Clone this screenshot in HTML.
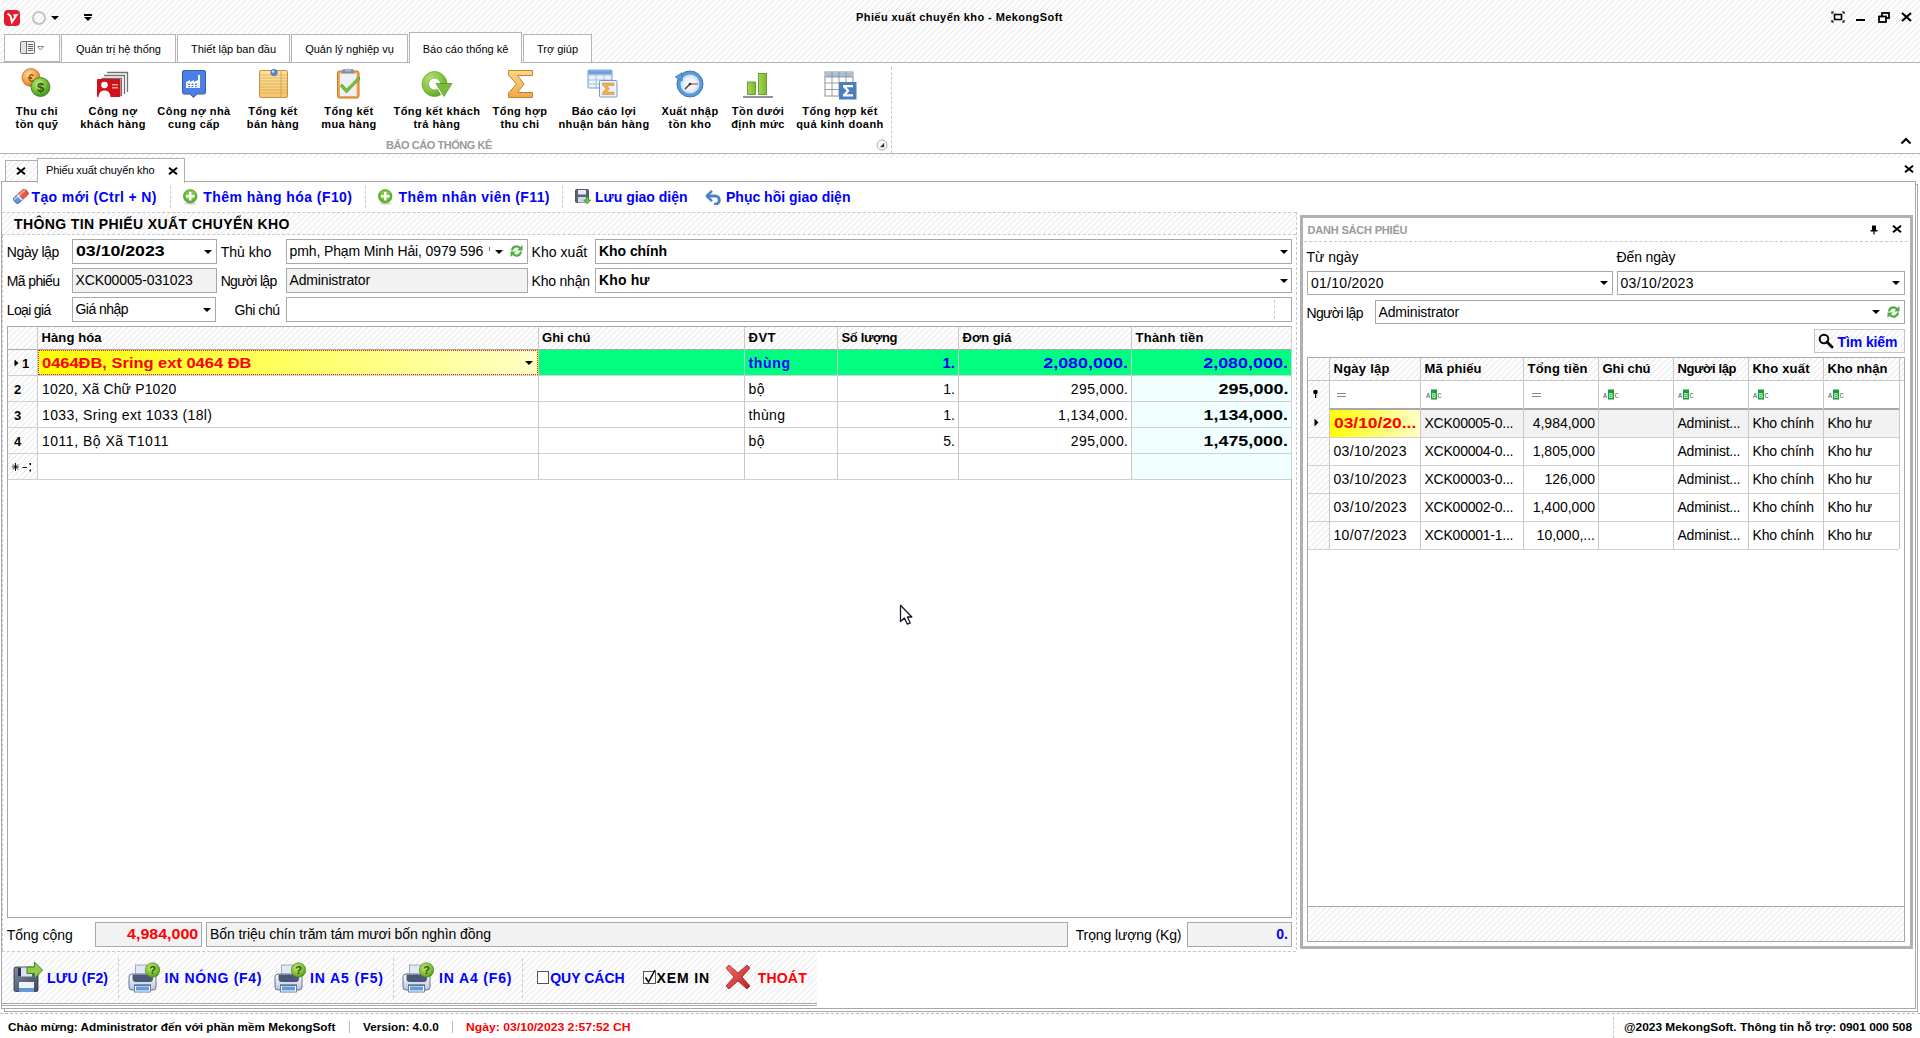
<!DOCTYPE html>
<html><head><meta charset="utf-8">
<style>
*{margin:0;padding:0;box-sizing:border-box}
html,body{width:1920px;height:1038px;overflow:hidden;background:#fff;font-family:"Liberation Sans",sans-serif;color:#000;position:relative}
.a{position:absolute;white-space:nowrap}
.h{background-color:#fdfdfd}
.b{font-weight:bold}
.tab{position:absolute;top:34px;height:28px;border:1px solid #b4b4b4;border-bottom:none;background:#fff;font-size:11px;text-align:center;line-height:29px;color:#000}
.rl{position:absolute;top:105px;letter-spacing:0.45px;font-size:11px;font-weight:bold;text-align:center;line-height:13px;white-space:nowrap}
.ico{position:absolute;top:67px;width:34px;height:34px}
.fld{position:absolute;border:1px solid #a8a8a8;background:#fff;height:25px;font-size:14px;line-height:23px;padding-left:3px;white-space:nowrap;overflow:hidden}
.gray{background:#f2f2f2}
.lbl{position:absolute;font-size:14px;line-height:16px;white-space:nowrap}
.dd{position:absolute;width:0;height:0;border-left:4px solid transparent;border-right:4px solid transparent;border-top:4px solid #000}
.dash{position:absolute;border-top:1px dashed #c8c8c8}
.vdash{position:absolute;border-left:1px dashed #c8c8c8}
.tbt{position:absolute;top:188px;font-size:14px;font-weight:bold;color:#0000ff;line-height:18px;white-space:nowrap}
.gc{position:absolute;font-size:14px;line-height:26px;white-space:nowrap;overflow:hidden}
.hl{position:absolute;background:#d0d0d0}
</style></head><body><svg width="0" height="0" style="position:absolute"><defs><pattern id="hp" width="6" height="6" patternUnits="userSpaceOnUse"><rect x="0" y="5" width="1" height="1" fill="#e6e6e6"/><rect x="1" y="4" width="1" height="1" fill="#e6e6e6"/><rect x="2" y="3" width="1" height="1" fill="#e6e6e6"/><rect x="3" y="2" width="1" height="1" fill="#e6e6e6"/><rect x="4" y="1" width="1" height="1" fill="#e6e6e6"/><rect x="5" y="0" width="1" height="1" fill="#e6e6e6"/></pattern></defs></svg>

<!-- ===== TITLE BAR + RIBBON TABS (hatched) ===== -->
<div class="a h" style="left:0;top:0;width:1920px;height:62px"><svg width="100%" height="100%" style="display:block"><rect width="100%" height="100%" fill="url(#hp)"/></svg></div>
<!-- logo -->
<div class="a" style="left:4px;top:10px;width:16px;height:16px;background:#e8192c;border-radius:4px"></div>
<svg class="a" style="left:4px;top:10px" width="16" height="16" viewBox="0 0 16 16"><path d="M3.5 3.5 L6.5 6 L8 12 L12.5 5 L9.5 5.5" fill="none" stroke="#fff" stroke-width="2"/></svg>
<div class="a" style="left:32px;top:11px;width:14px;height:14px;border:2px solid #c4c4c4;border-radius:50%"></div>
<div class="dd" style="left:51px;top:16px"></div>
<div class="a" style="left:84px;top:14px;width:8px;height:1.5px;background:#000"></div>
<div class="dd" style="left:84px;top:17px"></div>
<div class="a b" style="left:856px;top:12.2px;font-size:11px;line-height:11px;letter-spacing:0.42px">Phiếu xuất chuyển kho - MekongSoft</div>
<!-- window buttons -->
<svg class="a" style="left:1831px;top:11px" width="14" height="12" viewBox="0 0 14 12"><path d="M1 3V1H3M11 1H13V3M13 9V11H11M3 11H1V9" fill="none" stroke="#000" stroke-width="1.2"/><rect x="3.5" y="3.5" width="7" height="5" fill="none" stroke="#000" stroke-width="1.6"/></svg>
<div class="a" style="left:1856px;top:19px;width:9px;height:2px;background:#000"></div>
<svg class="a" style="left:1878px;top:12px" width="12" height="11" viewBox="0 0 12 11"><rect x="4" y="1" width="7" height="5" fill="none" stroke="#000" stroke-width="1.8"/><rect x="1" y="4.5" width="7" height="5.5" fill="#fff" stroke="#000" stroke-width="1.8"/></svg>
<svg class="a" style="left:1901px;top:12px" width="11" height="10" viewBox="0 0 11 10"><path d="M1 1L10 9M10 1L1 9" stroke="#000" stroke-width="2.2"/></svg>

<!-- tabs -->
<div class="tab" style="left:4px;width:56px;height:28px;border-bottom:1px solid #b4b4b4"></div>
<svg class="a" style="left:19px;top:40px" width="28" height="15" viewBox="0 0 28 15"><rect x="1.5" y="1.5" width="14" height="12" rx="1.5" fill="#f8f8f8" stroke="#707070"/><rect x="2" y="2" width="5" height="11" fill="#e4e4e4"/><line x1="7.5" y1="2" x2="7.5" y2="13" stroke="#707070"/><line x1="9" y1="4.5" x2="14" y2="4.5" stroke="#606060"/><line x1="9" y1="6.5" x2="14" y2="6.5" stroke="#606060"/><line x1="9" y1="8.5" x2="14" y2="8.5" stroke="#606060"/><line x1="9" y1="10.5" x2="14" y2="10.5" stroke="#606060"/><path d="M18.5 6.5L24.5 6.5L21.5 10Z" fill="none" stroke="#888"/></svg>
<div class="tab" style="left:61px;width:115px">Quản trị hệ thống</div>
<div class="tab" style="left:177px;width:113px">Thiết lập ban đầu</div>
<div class="tab" style="left:291px;width:117px">Quản lý nghiệp vụ</div>
<div class="tab" style="left:409px;width:113px;top:32px;height:31px;line-height:33px;z-index:2">Báo cáo thống kê</div>
<div class="tab" style="left:523px;width:69px">Trợ giúp</div>
<div class="a" style="left:0;top:62px;width:1920px;height:1px;background:#b4b4b4"></div>
<div class="a" style="left:410px;top:62px;width:111px;height:1px;background:#fff;z-index:3"></div>

<!-- ===== RIBBON CONTENT ===== -->
<div class="a" style="left:0;top:63px;width:1920px;height:90px;background:#fff"></div>
<div class="a" style="left:0;top:153px;width:1920px;height:1px;background:#b4b4b4"></div>
<!-- 1 Thu chi ton quy: coins -->
<svg class="a" style="left:21px;top:68px" width="32" height="32" viewBox="0 0 32 32">
<defs><radialGradient id="gC1" cx="0.4" cy="0.35" r="0.7"><stop offset="0" stop-color="#ffe3a8"/><stop offset="0.6" stop-color="#f0a040"/><stop offset="1" stop-color="#c87018"/></radialGradient>
<radialGradient id="gC2" cx="0.4" cy="0.35" r="0.7"><stop offset="0" stop-color="#c8f080"/><stop offset="0.6" stop-color="#70b830"/><stop offset="1" stop-color="#3e8a18"/></radialGradient></defs>
<circle cx="10" cy="9.5" r="9" fill="url(#gC1)" stroke="#c07020" stroke-width="0.8"/>
<text x="10" y="13.5" font-size="11" font-weight="bold" text-anchor="middle" fill="#a05010" font-family="Liberation Sans">€</text>
<circle cx="19.5" cy="19" r="9.5" fill="url(#gC2)" stroke="#3a7a18" stroke-width="0.8"/>
<text x="19.5" y="24" font-size="13" font-weight="bold" text-anchor="middle" fill="#2a5a10" font-family="Liberation Sans">$</text>
</svg>
<div class="rl" style="left:0;width:74px">Thu chi<br>tồn quỹ</div>

<!-- 2 Cong no khach hang -->
<svg class="a" style="left:96px;top:68px" width="34" height="32" viewBox="0 0 34 32">
<path d="M11 4.5H31.5V24" fill="none" stroke="#707070" stroke-width="1.3"/>
<path d="M8 7.5H28.5V26" fill="none" stroke="#707070" stroke-width="1.3"/>
<path d="M5.5 10.5H25.5V28" fill="none" stroke="#707070" stroke-width="1.3"/>
<rect x="1" y="11" width="23.5" height="18" rx="1" fill="#d0101a"/>
<circle cx="8.5" cy="17" r="3.3" fill="#fff"/>
<path d="M2.5 29C3 24.5 5 22.5 8.5 22.5C12 22.5 14 24.5 14.5 29Z" fill="#fff"/>
<rect x="16" y="16" width="6" height="1.5" fill="#f4a0a0"/><rect x="16" y="19" width="6" height="1.5" fill="#f4a0a0"/>
</svg>
<div class="rl" style="left:74px;width:78px">Công nợ<br>khách hàng</div>

<!-- 3 Cong no nha cung cap -->
<svg class="a" style="left:181px;top:69px" width="26" height="32" viewBox="0 0 26 32">
<path d="M3 1.5H23A1.5 1.5 0 0 1 24.5 3V23.5A1.5 1.5 0 0 1 23 25H16L12.5 28.5L9 25H3A1.5 1.5 0 0 1 1.5 23.5V3A1.5 1.5 0 0 1 3 1.5Z" fill="#4a7ee8" stroke="#3a5a9a" stroke-width="1"/>
<path d="M5 19V13L9 11V13L13 11V13L17 11V6H19V19Z" fill="#fff"/>
<rect x="7" y="14.5" width="2" height="1.5" fill="#4a7ee8"/><rect x="10.5" y="14.5" width="2" height="1.5" fill="#4a7ee8"/><rect x="14" y="14.5" width="2" height="1.5" fill="#4a7ee8"/>
<rect x="7" y="17" width="2" height="1.2" fill="#4a7ee8"/><rect x="10.5" y="17" width="2" height="1.2" fill="#4a7ee8"/><rect x="14" y="17" width="2" height="1.2" fill="#4a7ee8"/>
</svg>
<div class="rl" style="left:152px;width:84px">Công nợ nhà<br>cung cấp</div>

<!-- 4 Tong ket ban hang: notepad -->
<svg class="a" style="left:258px;top:68px" width="32" height="32" viewBox="0 0 32 32">
<defs><linearGradient id="gNp" x1="0" y1="0" x2="0" y2="1"><stop offset="0" stop-color="#fce4a0"/><stop offset="1" stop-color="#f4c868"/></linearGradient></defs>
<rect x="1.5" y="2.5" width="28" height="27" rx="1.5" fill="url(#gNp)" stroke="#c89040" stroke-width="1"/>
<g stroke="#d09848" stroke-width="0.7" opacity="0.8"><line x1="2" y1="7" x2="29" y2="7"/><line x1="2" y1="10" x2="29" y2="10"/><line x1="2" y1="13" x2="29" y2="13"/><line x1="2" y1="16" x2="29" y2="16"/><line x1="2" y1="19" x2="29" y2="19"/><line x1="2" y1="22" x2="29" y2="22"/><line x1="2" y1="25" x2="29" y2="25"/></g>
<line x1="23" y1="3" x2="23" y2="29" stroke="#e09050" stroke-width="0.8"/>
<circle cx="16" cy="4.5" r="3.3" fill="#5a8ac8" stroke="#3a6aa8" stroke-width="0.6"/><circle cx="15" cy="3.5" r="1.2" fill="#c8e0f8"/>
</svg>
<div class="rl" style="left:236px;width:74px">Tổng kết<br>bán hàng</div>

<!-- 5 Tong ket mua hang: clipboard -->
<svg class="a" style="left:336px;top:68px" width="26" height="32" viewBox="0 0 26 32">
<rect x="1.5" y="3" width="21.5" height="27" rx="2" fill="#f0a850" stroke="#c07828" stroke-width="1"/>
<rect x="4" y="5.5" width="16.5" height="22.5" fill="#eef0f6"/>
<path d="M7 1.5H17L18 5H6Z" fill="#8898b8" stroke="#6878a0" stroke-width="0.6"/>
<ellipse cx="12" cy="2" rx="3" ry="1.5" fill="#a8b8d0"/>
<path d="M6 16L10.5 21L23 8.5L24 11L10.5 25L4.5 18.5Z" fill="#78c038" stroke="#4a8a20" stroke-width="0.6"/>
</svg>
<div class="rl" style="left:310px;width:78px">Tổng kết<br>mua hàng</div>

<!-- 6 Tong ket khach tra hang: green refresh -->
<svg class="a" style="left:421px;top:69px" width="32" height="30" viewBox="0 0 32 30">
<defs><radialGradient id="gR" cx="0.35" cy="0.3" r="0.8"><stop offset="0" stop-color="#b8e070"/><stop offset="0.7" stop-color="#78bc38"/><stop offset="1" stop-color="#4a9020"/></radialGradient></defs>
<path d="M26 15A12.5 12.5 0 1 0 19.75 25.83L16.5 20.2A6 6 0 1 1 19.5 15Z" fill="url(#gR)" stroke="#5a9a28" stroke-width="0.6"/>
<path d="M15 14.5H31L23 27.5Z" fill="#78bc38" stroke="#4a8a20" stroke-width="0.6"/>
</svg>
<div class="rl" style="left:388px;width:98px">Tổng kết khách<br>trả hàng</div>

<!-- 7 Tong hop thu chi: sigma -->
<svg class="a" style="left:507px;top:69px" width="27" height="30" viewBox="0 0 27 30">
<defs><linearGradient id="gS" x1="0" y1="0" x2="0" y2="1"><stop offset="0" stop-color="#fbd888"/><stop offset="1" stop-color="#f0a848"/></linearGradient></defs>
<path d="M1.5 1.5H25.5V6.5H10.5L17 15L10.5 23.5H25.5V28.5H1.5V24L9.5 15L1.5 6Z" fill="url(#gS)" stroke="#c88030" stroke-width="1"/>
</svg>
<div class="rl" style="left:486px;width:68px">Tổng hợp<br>thu chi</div>

<!-- 8 Bao cao loi nhuan: table + sigma -->
<svg class="a" style="left:587px;top:69px" width="32" height="30" viewBox="0 0 32 30">
<rect x="1" y="1" width="24" height="18" rx="1" fill="#eef2fa" stroke="#7898c8" stroke-width="1"/>
<rect x="1.5" y="1.5" width="23" height="4" fill="#6aa0e0"/>
<g stroke="#98b0d8" stroke-width="0.8"><line x1="1" y1="6" x2="25" y2="6"/><line x1="1" y1="11" x2="25" y2="11"/><line x1="1" y1="15" x2="25" y2="15"/><line x1="9" y1="1" x2="9" y2="19"/><line x1="17" y1="1" x2="17" y2="19"/></g>
<rect x="12.5" y="11.5" width="17.5" height="16.5" rx="1" fill="#eef2fa" stroke="#7898c8" stroke-width="1"/>
<path d="M15.5 14H27V16.5H19.5L22.5 19.8L19.5 23H27V25.5H15.5V23.5L19 19.8L15.5 16Z" fill="#f0b050" stroke="#c88030" stroke-width="0.5"/>
</svg>
<div class="rl" style="left:550px;width:108px">Báo cáo lợi<br>nhuận bán hàng</div>

<!-- 9 Xuat nhap ton kho: clock w/ arrow -->
<svg class="a" style="left:674px;top:68px" width="32" height="32" viewBox="0 0 32 32">
<defs><radialGradient id="gX" cx="0.5" cy="0.5" r="0.55"><stop offset="0" stop-color="#ffffff"/><stop offset="0.6" stop-color="#e8f0f8"/><stop offset="1" stop-color="#c0d4ec"/></radialGradient></defs>
<circle cx="16" cy="16" r="13" fill="#5a9ad8" stroke="#3a78b8" stroke-width="1"/>
<circle cx="16" cy="16" r="9.5" fill="url(#gX)"/>
<path d="M1 9L8 4.5L8.5 13Z" fill="#5a9ad8" stroke="#3a78b8" stroke-width="0.6"/>
<line x1="16" y1="16" x2="11" y2="21" stroke="#303030" stroke-width="1.2"/>
<line x1="16" y1="16" x2="24" y2="16" stroke="#d02020" stroke-width="1"/>
<circle cx="16" cy="16" r="1.3" fill="#303030"/>
</svg>
<div class="rl" style="left:650px;width:80px">Xuất nhập<br>tồn kho</div>

<!-- 10 Ton duoi dinh muc: bars -->
<svg class="a" style="left:742px;top:70px" width="32" height="30" viewBox="0 0 32 30">
<defs><linearGradient id="gB" x1="0" y1="0" x2="1" y2="0"><stop offset="0" stop-color="#a8d850"/><stop offset="1" stop-color="#78b830"/></linearGradient></defs>
<rect x="5.5" y="12" width="8" height="12.5" fill="url(#gB)" stroke="#5a8a28" stroke-width="0.8"/>
<rect x="16.5" y="3.5" width="8" height="21" fill="url(#gB)" stroke="#5a8a28" stroke-width="0.8"/>
<line x1="1" y1="27" x2="31" y2="27" stroke="#404868" stroke-width="1.2"/>
</svg>
<div class="rl" style="left:722px;width:72px">Tồn dưới<br>định mức</div>

<!-- 11 Tong hop ket qua kinh doanh: grid + sigma -->
<svg class="a" style="left:824px;top:70px" width="34" height="32" viewBox="0 0 34 32">
<rect x="1" y="2" width="28" height="24" fill="#fff" stroke="#909090" stroke-width="1"/>
<rect x="1.5" y="2.5" width="27" height="4.5" fill="#a8bcdc"/>
<g stroke="#909090" stroke-width="0.9"><line x1="1" y1="7" x2="29" y2="7"/><line x1="1" y1="13" x2="29" y2="13"/><line x1="1" y1="19.5" x2="29" y2="19.5"/><line x1="8" y1="2" x2="8" y2="26"/><line x1="15" y1="2" x2="15" y2="26"/><line x1="22" y1="2" x2="22" y2="26"/></g>
<rect x="15" y="12" width="17.5" height="17.5" fill="#4a7ec0"/>
<path d="M19 15H29V17.3H22.5L25.5 20.8L22.5 24.2H29V26.5H19V24.5L22.7 20.8L19 17Z" fill="#fff"/>
</svg>
<div class="rl" style="left:790px;width:100px">Tổng hợp kết<br>quả kinh doanh</div>

<div class="a b" style="left:386px;top:139px;font-size:11px;line-height:13px;color:#9a9a9a;letter-spacing:-0.45px">BÁO CÁO THỐNG KÊ</div>
<div class="vdash" style="left:891px;top:67px;height:86px"></div>
<svg class="a" style="left:876px;top:139px" width="12" height="12" viewBox="0 0 12 12"><circle cx="6" cy="6" r="5" fill="#fff" stroke="#aaa"/><path d="M3.8 8.2H8.2V3.8Z" fill="#333"/></svg>
<svg class="a" style="left:1900px;top:137px" width="12" height="8" viewBox="0 0 12 8"><path d="M1.5 6.5L6 2L10.5 6.5" fill="none" stroke="#000" stroke-width="2"/></svg>

<!--RIBBON_ITEMS_END-->

<div class="a h" style="left:0;top:154px;width:1920px;height:4px"><svg width="100%" height="100%" style="display:block"><rect width="100%" height="100%" fill="url(#hp)"/></svg></div><div class="a" style="left:4px;top:184px;width:1914px;height:828px;border:1px solid #a8a8a8;background:#fff"></div><div class="a" style="left:1px;top:181px;width:1915px;height:828px;border:1px solid #a8a8a8;background:#fff"></div><div class="a h" style="left:5px;top:160px;width:33px;height:21px;border:1px solid #b0b0b0;border-bottom:none"><svg width="100%" height="100%" style="display:block"><rect width="100%" height="100%" fill="url(#hp)"/></svg></div><svg class="a" style="left:16px;top:167px" width="10" height="8" viewBox="0 0 10 8"><path d="M1 0.8L9 7.2M9 0.8L1 7.2" stroke="#000" stroke-width="2"/></svg><div class="a" style="left:37px;top:158px;width:148px;height:25px;border:1px solid #b0b0b0;border-bottom:none;background:#fff"></div><div class="a" style="top:164.69px;font-size:11px;line-height:11px;letter-spacing:-0.140px;left:46.00px;">Phiếu xuất chuyển kho</div><svg class="a" style="left:168px;top:167px" width="10" height="8" viewBox="0 0 10 8"><path d="M1 0.8L9 7.2M9 0.8L1 7.2" stroke="#000" stroke-width="2"/></svg><svg class="a" style="left:1904px;top:165px" width="10" height="8" viewBox="0 0 10 8"><path d="M1 0.8L9 7.2M9 0.8L1 7.2" stroke="#000" stroke-width="2"/></svg><svg class="a" style="left:12px;top:189px" width="18" height="16" viewBox="0 0 18 16">
<g transform="rotate(-42 8.5 7.5)">
<rect x="1" y="4" width="16" height="7.2" rx="2.5" fill="#e05a48" stroke="#b03020" stroke-width="0.7"/>
<rect x="1" y="4" width="7" height="7.2" rx="2.5" fill="#5a98e0" stroke="#3a70b0" stroke-width="0.7"/>
<rect x="6.5" y="4.2" width="1.6" height="7" fill="#f4f4f4"/>
<rect x="1.5" y="4.6" width="15" height="2" rx="1" fill="#ffffff" opacity="0.45"/>
</g></svg><div class="a" style="top:190.15px;font-size:14px;line-height:14px;font-weight:bold;color:#0000ff;letter-spacing:0.385px;left:31.50px;">Tạo mới (Ctrl + N)</div><div class="vdash" style="left:170px;top:186px;height:22px"></div><svg class="a" style="left:183px;top:189px" width="15" height="16" viewBox="0 0 15 16">
<ellipse cx="7.5" cy="14.5" rx="6" ry="1.3" fill="#d8d8d8"/>
<circle cx="7.2" cy="7.3" r="6.8" fill="#62b230" stroke="#4a9020" stroke-width="0.6"/>
<circle cx="7.2" cy="6.3" r="5" fill="#80cc50"/>
<path d="M6 3H8.4V6.1H11.5V8.5H8.4V11.6H6V8.5H2.9V6.1H6Z" fill="#fff"/></svg><div class="a" style="top:190.15px;font-size:14px;line-height:14px;font-weight:bold;color:#0000ff;letter-spacing:0.440px;left:203.30px;">Thêm hàng hóa (F10)</div><div class="vdash" style="left:365px;top:186px;height:22px"></div><svg class="a" style="left:378px;top:189px" width="15" height="16" viewBox="0 0 15 16">
<ellipse cx="7.5" cy="14.5" rx="6" ry="1.3" fill="#d8d8d8"/>
<circle cx="7.2" cy="7.3" r="6.8" fill="#62b230" stroke="#4a9020" stroke-width="0.6"/>
<circle cx="7.2" cy="6.3" r="5" fill="#80cc50"/>
<path d="M6 3H8.4V6.1H11.5V8.5H8.4V11.6H6V8.5H2.9V6.1H6Z" fill="#fff"/></svg><div class="a" style="top:190.15px;font-size:14px;line-height:14px;font-weight:bold;color:#0000ff;letter-spacing:0.414px;left:398.50px;">Thêm nhân viên (F11)</div><div class="vdash" style="left:562px;top:186px;height:22px"></div><svg class="a" style="left:575px;top:189px" width="17" height="16" viewBox="0 0 17 16">
<rect x="0.5" y="0.5" width="13" height="13" rx="1" fill="#5a6478" stroke="#3a4050" stroke-width="0.8"/>
<rect x="3" y="1" width="8" height="4.5" fill="#e8ecf4"/><rect x="3" y="8" width="8" height="5.5" fill="#d0d8e8"/>
<path d="M11 8.5H13.5V11H16L12.2 15L8.5 11H11Z" fill="#6cc040" stroke="#3a8a20" stroke-width="0.6"/></svg><div class="a" style="top:190.15px;font-size:14px;line-height:14px;font-weight:bold;color:#0000ff;left:595.00px;">Lưu giao diện</div><svg class="a" style="left:705px;top:189px" width="18" height="16" viewBox="0 0 18 16">
<path d="M7 1.8L1.8 7L7 12.2" fill="none" stroke="#4a80c8" stroke-width="2.5" stroke-linejoin="round"/>
<path d="M2.5 7H11A4.2 4.2 0 0 1 11 15.2H9" fill="none" stroke="#4a80c8" stroke-width="2.8"/></svg><div class="a" style="top:190.15px;font-size:14px;line-height:14px;font-weight:bold;color:#0000ff;left:726.00px;">Phục hồi giao diện</div><div class="dash" style="left:2px;top:212px;width:1294px"></div><div class="a h" style="left:2px;top:213px;width:1294px;height:21px"><svg width="100%" height="100%" style="display:block"><rect width="100%" height="100%" fill="url(#hp)"/></svg></div><div class="dash" style="left:2px;top:234px;width:1294px"></div><div class="vdash" style="left:1296px;top:212px;height:738px"></div><div class="vdash" style="left:2px;top:235px;height:716px"></div><div class="a" style="top:216.65px;font-size:14px;line-height:14px;font-weight:bold;letter-spacing:0.394px;left:14.00px;">THÔNG TIN PHIẾU XUẤT CHUYỂN KHO</div><div class="a" style="top:245.15px;font-size:14px;line-height:14px;letter-spacing:-0.394px;left:6.80px;">Ngày lập</div><div class="a" style="left:72px;top:239px;width:145px;height:25px;border:1px solid #a8a8a8;background:#fff;"></div><div class="a" style="top:244.15px;font-size:14px;line-height:14px;font-weight:bold;left:75.70px;transform:scaleX(1.2654);transform-origin:left;">03/10/2023</div><div class="dd" style="left:204px;top:250px"></div><div class="a" style="top:245.15px;font-size:14px;line-height:14px;left:220.70px;">Thủ kho</div><div class="a" style="left:286px;top:239px;width:242px;height:25px;border:1px solid #a8a8a8;background:#fff;"></div><div class="a" style="top:244.15px;font-size:14px;line-height:14px;letter-spacing:-0.119px;left:289.50px;">pmh, Phạm Minh Hải, 0979 596 '</div><div class="a" style="left:487px;top:241px;width:6px;height:21px;background:#fff"></div><div class="a" style="left:489px;top:247px;width:1px;height:4px;background:#777"></div><div class="dd" style="left:495px;top:250px"></div><svg class="a" style="left:509px;top:244px" width="15" height="14" viewBox="0 0 15 14">
<path d="M2 6.5A5.5 5.5 0 0 1 11.5 3L13.5 1V6.5H8L10 4.5A3.6 3.6 0 0 0 4 6.5Z" fill="#4cae3c"/>
<path d="M13 7.5A5.5 5.5 0 0 1 3.5 11L1.5 13V7.5H7L5 9.5A3.6 3.6 0 0 0 11 7.5Z" fill="#4cae3c"/></svg><div class="a" style="top:245.15px;font-size:14px;line-height:14px;letter-spacing:0.063px;left:531.50px;">Kho xuất</div><div class="a" style="left:595px;top:239px;width:697px;height:25px;border:1px solid #a8a8a8;background:#fff;"></div><div class="a" style="top:244.15px;font-size:14px;line-height:14px;font-weight:bold;letter-spacing:-0.054px;left:599.00px;">Kho chính</div><div class="dd" style="left:1280px;top:250px"></div><div class="a" style="top:274.15px;font-size:14px;line-height:14px;letter-spacing:-0.628px;left:6.80px;">Mã phiếu</div><div class="a" style="left:72px;top:268px;width:145px;height:25px;border:1px solid #a8a8a8;background:#f2f2f2;"></div><div class="a" style="top:273.15px;font-size:14px;line-height:14px;letter-spacing:-0.121px;left:75.50px;">XCK00005-031023</div><div class="a" style="top:274.15px;font-size:14px;line-height:14px;letter-spacing:-0.704px;left:220.70px;">Người lập</div><div class="a" style="left:286px;top:268px;width:242px;height:25px;border:1px solid #a8a8a8;background:#f2f2f2;"></div><div class="a" style="top:273.15px;font-size:14px;line-height:14px;letter-spacing:-0.156px;left:289.50px;">Administrator</div><div class="a" style="top:274.15px;font-size:14px;line-height:14px;letter-spacing:-0.206px;left:531.50px;">Kho nhận</div><div class="a" style="left:595px;top:268px;width:697px;height:25px;border:1px solid #a8a8a8;background:#fff;"></div><div class="a" style="top:273.15px;font-size:14px;line-height:14px;font-weight:bold;letter-spacing:0.141px;left:599.00px;">Kho hư</div><div class="dd" style="left:1280px;top:279px"></div><div class="a" style="top:303.15px;font-size:14px;line-height:14px;letter-spacing:-0.663px;left:6.80px;">Loại giá</div><div class="a" style="left:72px;top:297px;width:144px;height:25px;border:1px solid #a8a8a8;background:#fff;"></div><div class="a" style="top:302.15px;font-size:14px;line-height:14px;letter-spacing:-0.546px;left:75.50px;">Giá nhập</div><div class="dd" style="left:203px;top:308px"></div><div class="a" style="top:303.15px;font-size:14px;line-height:14px;letter-spacing:-0.458px;left:234.50px;">Ghi chú</div><div class="a" style="left:286px;top:297px;width:1006px;height:25px;border:1px solid #a8a8a8;background:#fff;"></div><div class="vdash" style="left:1274px;top:300px;height:19px"></div><div class="a" style="left:7px;top:326px;width:1285px;height:592px;border:1px solid #a8a8a8;background:#fff"></div><div class="a h" style="left:8px;top:327px;width:1283px;height:22px"><svg width="100%" height="100%" style="display:block"><rect width="100%" height="100%" fill="url(#hp)"/></svg></div><div class="a" style="left:8px;top:349px;width:1283px;height:1px;background:#a8a8a8"></div><div class="a" style="left:538px;top:350px;width:753px;height:25px;background:#00ff80"></div><div class="a" style="left:38px;top:350px;width:500px;height:25px;background:linear-gradient(90deg,#ffff00,#ffffc4);border:1px dotted #e02020"></div><div class="a" style="left:1132px;top:376px;width:159px;height:103px;background:#f0ffff"></div><div class="a h" style="left:8px;top:350px;width:29px;height:129px"><svg width="100%" height="100%" style="display:block"><rect width="100%" height="100%" fill="url(#hp)"/></svg></div><div class="hl" style="left:8px;top:375px;width:1283px;height:1px"></div><div class="hl" style="left:8px;top:401px;width:1283px;height:1px"></div><div class="hl" style="left:8px;top:427px;width:1283px;height:1px"></div><div class="hl" style="left:8px;top:453px;width:1283px;height:1px"></div><div class="hl" style="left:8px;top:479px;width:1283px;height:1px"></div><div class="hl" style="left:37px;top:327px;width:1px;height:152px;background:#c8c8c8"></div><div class="hl" style="left:538px;top:327px;width:1px;height:152px;background:#c8c8c8"></div><div class="hl" style="left:744px;top:327px;width:1px;height:152px;background:#c8c8c8"></div><div class="hl" style="left:837px;top:327px;width:1px;height:152px;background:#c8c8c8"></div><div class="hl" style="left:958px;top:327px;width:1px;height:152px;background:#c8c8c8"></div><div class="hl" style="left:1131px;top:327px;width:1px;height:152px;background:#c8c8c8"></div><div class="a" style="left:1291px;top:327px;width:1px;height:152px;background:#d0d0d0"></div><div class="a" style="top:330.50px;font-size:13px;line-height:13px;font-weight:bold;letter-spacing:0.111px;left:41.50px;">Hàng hóa</div><div class="a" style="top:330.50px;font-size:13px;line-height:13px;font-weight:bold;letter-spacing:0.019px;left:542.00px;">Ghi chú</div><div class="a" style="top:330.50px;font-size:13px;line-height:13px;font-weight:bold;letter-spacing:0.500px;left:748.50px;">ĐVT</div><div class="a" style="top:330.50px;font-size:13px;line-height:13px;font-weight:bold;letter-spacing:-0.339px;left:841.50px;">Số lượng</div><div class="a" style="top:330.50px;font-size:13px;line-height:13px;font-weight:bold;left:962.50px;">Đơn giá</div><div class="a" style="top:330.50px;font-size:13px;line-height:13px;font-weight:bold;letter-spacing:0.254px;left:1135.50px;">Thành tiền</div><svg class="a" style="left:14px;top:359px" width="5" height="8" viewBox="0 0 5 8"><path d="M0.5 0.5L4.5 4L0.5 7.5Z" fill="#000"/></svg><div class="a" style="top:357.00px;font-size:13px;line-height:13px;font-weight:bold;left:22.10px;">1</div><div class="a" style="top:383.00px;font-size:13px;line-height:13px;font-weight:bold;left:14.10px;">2</div><div class="a" style="top:409.00px;font-size:13px;line-height:13px;font-weight:bold;left:14.10px;">3</div><div class="a" style="top:435.00px;font-size:13px;line-height:13px;font-weight:bold;left:14.10px;">4</div><svg class="a" style="left:11px;top:461px" width="22" height="12" viewBox="0 0 22 12"><g stroke="#000" stroke-width="0.9"><line x1="4.5" y1="2" x2="4.5" y2="10"/><line x1="1" y1="6" x2="8" y2="6"/><line x1="2" y1="3.5" x2="7" y2="8.5"/><line x1="7" y1="3.5" x2="2" y2="8.5"/><line x1="11.5" y1="6.5" x2="16" y2="6.5"/></g><rect x="18.5" y="2" width="1.5" height="2" fill="#000"/><rect x="18.5" y="8.5" width="1.5" height="2" fill="#000"/></svg><div class="a" style="top:355.30px;font-size:15px;line-height:15px;font-weight:bold;color:#ff0000;left:41.80px;transform:scaleX(1.0968);transform-origin:left;">0464ĐB, Sring ext 0464 ĐB</div><div class="dd" style="left:525px;top:361px"></div><div class="a" style="top:356.15px;font-size:14px;line-height:14px;font-weight:bold;color:#0000ff;letter-spacing:0.658px;left:748.50px;">thùng</div><div class="a" style="top:355.30px;font-size:15px;line-height:15px;font-weight:bold;color:#0000ff;left:892.49px;width:62.51px;text-align:right;">1.</div><div class="a" style="top:355.30px;font-size:15px;line-height:15px;font-weight:bold;color:#0000ff;left:1007.10px;width:120.90px;text-align:right;transform:scaleX(1.1946);transform-origin:right;">2,080,000.</div><div class="a" style="top:355.30px;font-size:15px;line-height:15px;font-weight:bold;color:#0000ff;left:1167.10px;width:120.90px;text-align:right;transform:scaleX(1.1946);transform-origin:right;">2,080,000.</div><div class="a" style="top:382.15px;font-size:14px;line-height:14px;letter-spacing:0.160px;left:42.00px;">1020, Xã Chữ P1020</div><div class="a" style="top:382.15px;font-size:14px;line-height:14px;letter-spacing:0.428px;left:748.50px;">bộ</div><div class="a" style="top:382.15px;font-size:14px;line-height:14px;left:893.32px;width:61.68px;text-align:right;">1.</div><div class="a" style="top:382.15px;font-size:14px;line-height:14px;letter-spacing:0.386px;left:1020.80px;width:107.59px;text-align:right;">295,000.</div><div class="a" style="top:381.30px;font-size:15px;line-height:15px;font-weight:bold;left:1179.61px;width:108.39px;text-align:right;transform:scaleX(1.1971);transform-origin:right;">295,000.</div><div class="a" style="top:408.15px;font-size:14px;line-height:14px;letter-spacing:0.356px;left:42.00px;">1033, Sring ext 1033 (18l)</div><div class="a" style="top:408.15px;font-size:14px;line-height:14px;letter-spacing:0.366px;left:748.50px;">thùng</div><div class="a" style="top:408.15px;font-size:14px;line-height:14px;left:893.32px;width:61.68px;text-align:right;">1.</div><div class="a" style="top:408.15px;font-size:14px;line-height:14px;letter-spacing:0.414px;left:1008.10px;width:120.31px;text-align:right;">1,134,000.</div><div class="a" style="top:407.30px;font-size:15px;line-height:15px;font-weight:bold;left:1167.10px;width:120.90px;text-align:right;transform:scaleX(1.1889);transform-origin:right;">1,134,000.</div><div class="a" style="top:434.15px;font-size:14px;line-height:14px;letter-spacing:0.508px;left:42.00px;">1011, Bộ Xã T1011</div><div class="a" style="top:434.15px;font-size:14px;line-height:14px;letter-spacing:0.428px;left:748.50px;">bộ</div><div class="a" style="top:434.15px;font-size:14px;line-height:14px;left:893.32px;width:61.68px;text-align:right;">5.</div><div class="a" style="top:434.15px;font-size:14px;line-height:14px;letter-spacing:0.386px;left:1020.80px;width:107.59px;text-align:right;">295,000.</div><div class="a" style="top:433.30px;font-size:15px;line-height:15px;font-weight:bold;left:1167.10px;width:120.90px;text-align:right;transform:scaleX(1.1889);transform-origin:right;">1,475,000.</div><div class="a" style="top:928.15px;font-size:14px;line-height:14px;letter-spacing:-0.020px;left:6.80px;">Tổng cộng</div><div class="a" style="left:95px;top:922px;width:107px;height:25px;border:1px solid #a8a8a8;background:#f2f2f2;"></div><div class="a" style="top:927.15px;font-size:14px;line-height:14px;font-weight:bold;color:#ff0000;left:85.52px;width:112.28px;text-align:right;transform:scaleX(1.1423);transform-origin:right;">4,984,000</div><div class="a" style="left:206px;top:922px;width:862px;height:25px;border:1px solid #a8a8a8;background:#f2f2f2;"></div><div class="a" style="top:927.15px;font-size:14px;line-height:14px;letter-spacing:-0.070px;left:210.00px;">Bốn triệu chín trăm tám mươi bốn nghìn đồng</div><div class="a" style="top:928.15px;font-size:14px;line-height:14px;letter-spacing:-0.114px;left:1075.70px;">Trọng lượng (Kg)</div><div class="a" style="left:1187px;top:922px;width:105px;height:25px;border:1px solid #a8a8a8;background:#f2f2f2;"></div><div class="a" style="top:927.15px;font-size:14px;line-height:14px;font-weight:bold;color:#0000ff;left:1226.32px;width:61.68px;text-align:right;">0.</div><div class="dash" style="left:2px;top:951px;width:1294px"></div><div class="a h" style="left:2px;top:952px;width:815px;height:51px"><svg width="100%" height="100%" style="display:block"><rect width="100%" height="100%" fill="url(#hp)"/></svg></div><div class="a" style="left:2px;top:1003px;width:815px;height:1px;background:#a8a8a8"></div><div class="a" style="left:2px;top:1005px;width:815px;height:1px;background:#a8a8a8"></div><div class="dash" style="left:0;top:1013px;width:1920px;border-top-color:#b8b8b8"></div><svg class="a" style="left:13px;top:961px" width="31" height="31" viewBox="0 0 31 31">
<defs><linearGradient id="gFl" x1="0" y1="0" x2="1" y2="1"><stop offset="0" stop-color="#7a88a0"/><stop offset="1" stop-color="#404a62"/></linearGradient></defs>
<rect x="1" y="6" width="24" height="24.5" rx="1.5" fill="url(#gFl)" stroke="#2a3248" stroke-width="0.8"/>
<rect x="5" y="6.5" width="14" height="9" fill="#d8e2f0"/><rect x="5" y="6.5" width="3" height="9" fill="#2a3248"/>
<rect x="6" y="21" width="15" height="9.5" fill="#eef2f8"/><rect x="6" y="27" width="15" height="3.5" fill="#5a9ad8"/>
<path d="M14 6H21.5V1L29.5 9L21.5 17.5V12.5H14Z" fill="#90cc48" stroke="#3a7a18" stroke-width="0.9" stroke-linejoin="round"/></svg><div class="a" style="top:970.65px;font-size:14px;line-height:14px;font-weight:bold;color:#0000ff;letter-spacing:0.167px;left:47.00px;">LƯU (F2)</div><div class="vdash" style="left:118px;top:958px;height:40px"></div><svg class="a" style="left:128px;top:962px" width="32" height="31" viewBox="0 0 32 31">
<defs><linearGradient id="gPb" x1="0" y1="0" x2="0" y2="1"><stop offset="0" stop-color="#ffffff"/><stop offset="1" stop-color="#b8c4dc"/></linearGradient>
<radialGradient id="gQ" cx="0.4" cy="0.35" r="0.7"><stop offset="0" stop-color="#c0e870"/><stop offset="0.7" stop-color="#78b830"/><stop offset="1" stop-color="#4a8a20"/></radialGradient></defs>
<rect x="7.5" y="3" width="11" height="11" fill="#e4e8f2" stroke="#8898c0" stroke-width="0.8"/>
<rect x="1" y="12" width="27" height="16" rx="3" fill="url(#gPb)" stroke="#5a6890" stroke-width="0.9"/>
<path d="M4.5 12.5H25V16.5A3.5 3.5 0 0 1 21.5 20H8A3.5 3.5 0 0 1 4.5 16.5Z" fill="#4a5878"/>
<rect x="6" y="22.5" width="17" height="1.6" fill="#3a4868"/>
<rect x="6.5" y="23.5" width="16" height="6.5" fill="#fff" stroke="#5a6890" stroke-width="0.8"/>
<rect x="8" y="24.5" width="13" height="4" fill="#5aa0e0"/>
<circle cx="24.5" cy="8" r="7.3" fill="url(#gQ)" stroke="#4a8a20" stroke-width="0.6"/>
<text x="24.5" y="12.2" font-size="11" font-weight="bold" text-anchor="middle" fill="#2a5010" font-family="Liberation Sans">?</text></svg><div class="a" style="top:970.65px;font-size:14px;line-height:14px;font-weight:bold;color:#0000ff;letter-spacing:0.687px;left:164.50px;">IN NÓNG (F4)</div><svg class="a" style="left:274px;top:962px" width="32" height="31" viewBox="0 0 32 31">
<defs><linearGradient id="gPb" x1="0" y1="0" x2="0" y2="1"><stop offset="0" stop-color="#ffffff"/><stop offset="1" stop-color="#b8c4dc"/></linearGradient>
<radialGradient id="gQ" cx="0.4" cy="0.35" r="0.7"><stop offset="0" stop-color="#c0e870"/><stop offset="0.7" stop-color="#78b830"/><stop offset="1" stop-color="#4a8a20"/></radialGradient></defs>
<rect x="7.5" y="3" width="11" height="11" fill="#e4e8f2" stroke="#8898c0" stroke-width="0.8"/>
<rect x="1" y="12" width="27" height="16" rx="3" fill="url(#gPb)" stroke="#5a6890" stroke-width="0.9"/>
<path d="M4.5 12.5H25V16.5A3.5 3.5 0 0 1 21.5 20H8A3.5 3.5 0 0 1 4.5 16.5Z" fill="#4a5878"/>
<rect x="6" y="22.5" width="17" height="1.6" fill="#3a4868"/>
<rect x="6.5" y="23.5" width="16" height="6.5" fill="#fff" stroke="#5a6890" stroke-width="0.8"/>
<rect x="8" y="24.5" width="13" height="4" fill="#5aa0e0"/>
<circle cx="24.5" cy="8" r="7.3" fill="url(#gQ)" stroke="#4a8a20" stroke-width="0.6"/>
<text x="24.5" y="12.2" font-size="11" font-weight="bold" text-anchor="middle" fill="#2a5010" font-family="Liberation Sans">?</text></svg><div class="a" style="top:970.65px;font-size:14px;line-height:14px;font-weight:bold;color:#0000ff;letter-spacing:0.907px;left:310.00px;">IN A5 (F5)</div><div class="vdash" style="left:393px;top:958px;height:40px"></div><svg class="a" style="left:402px;top:962px" width="32" height="31" viewBox="0 0 32 31">
<defs><linearGradient id="gPb" x1="0" y1="0" x2="0" y2="1"><stop offset="0" stop-color="#ffffff"/><stop offset="1" stop-color="#b8c4dc"/></linearGradient>
<radialGradient id="gQ" cx="0.4" cy="0.35" r="0.7"><stop offset="0" stop-color="#c0e870"/><stop offset="0.7" stop-color="#78b830"/><stop offset="1" stop-color="#4a8a20"/></radialGradient></defs>
<rect x="7.5" y="3" width="11" height="11" fill="#e4e8f2" stroke="#8898c0" stroke-width="0.8"/>
<rect x="1" y="12" width="27" height="16" rx="3" fill="url(#gPb)" stroke="#5a6890" stroke-width="0.9"/>
<path d="M4.5 12.5H25V16.5A3.5 3.5 0 0 1 21.5 20H8A3.5 3.5 0 0 1 4.5 16.5Z" fill="#4a5878"/>
<rect x="6" y="22.5" width="17" height="1.6" fill="#3a4868"/>
<rect x="6.5" y="23.5" width="16" height="6.5" fill="#fff" stroke="#5a6890" stroke-width="0.8"/>
<rect x="8" y="24.5" width="13" height="4" fill="#5aa0e0"/>
<circle cx="24.5" cy="8" r="7.3" fill="url(#gQ)" stroke="#4a8a20" stroke-width="0.6"/>
<text x="24.5" y="12.2" font-size="11" font-weight="bold" text-anchor="middle" fill="#2a5010" font-family="Liberation Sans">?</text></svg><div class="a" style="top:970.65px;font-size:14px;line-height:14px;font-weight:bold;color:#0000ff;letter-spacing:0.851px;left:439.00px;">IN A4 (F6)</div><div class="vdash" style="left:522px;top:958px;height:40px"></div><div class="a" style="left:537px;top:971px;width:12px;height:13px;border:1px solid #555;background:#fff"></div><div class="a" style="top:970.65px;font-size:14px;line-height:14px;font-weight:bold;color:#0000ff;left:550.20px;">QUY CÁCH</div><div class="a" style="left:643px;top:971px;width:13px;height:13px;border:1px solid #555;background:#fff"></div><svg class="a" style="left:643px;top:969px" width="14" height="15" viewBox="0 0 14 15"><path d="M2.5 8.5L5.5 13L12 1" fill="none" stroke="#000" stroke-width="1.5"/></svg><div class="a" style="top:970.65px;font-size:14px;line-height:14px;font-weight:bold;letter-spacing:0.854px;left:656.50px;">XEM IN</div><svg class="a" style="left:725px;top:964px" width="26" height="26" viewBox="0 0 26 26">
<defs><linearGradient id="gX2" x1="0" y1="0" x2="1" y2="1"><stop offset="0" stop-color="#f07070"/><stop offset="1" stop-color="#b82020"/></linearGradient></defs>
<path d="M4 1L13 9L22 1L25 4L17 13L25 22L22 25L13 17L4 25L1 22L9 13L1 4Z" fill="url(#gX2)" stroke="#a02020" stroke-width="0.8" stroke-linejoin="round"/></svg><div class="a" style="top:970.65px;font-size:14px;line-height:14px;font-weight:bold;color:#ff0000;letter-spacing:0.197px;left:757.70px;">THOÁT</div><div class="a" style="left:1300px;top:215px;width:613px;height:734px;border:3px solid #b0b0b0;background:#fff"></div><div class="a" style="top:224.69px;font-size:11px;line-height:11px;font-weight:bold;color:#9a9a9a;letter-spacing:-0.191px;left:1307.50px;">DANH SÁCH PHIẾU</div><svg class="a" style="left:1870px;top:225px" width="8" height="10" viewBox="0 0 8 10"><path d="M2 0.5H6V5H7.5V6.5H4.6V9.5H3.4V6.5H0.5V5H2Z" fill="#000"/></svg><svg class="a" style="left:1892px;top:225px" width="10" height="8" viewBox="0 0 10 8"><path d="M1 0.8L9 7.2M9 0.8L1 7.2" stroke="#000" stroke-width="2"/></svg><div class="dash" style="left:1304px;top:241px;width:604px"></div><div class="a" style="top:250.15px;font-size:14px;line-height:14px;letter-spacing:-0.029px;left:1306.50px;">Từ ngày</div><div class="a" style="top:250.15px;font-size:14px;line-height:14px;letter-spacing:-0.133px;left:1616.50px;">Đến ngày</div><div class="a" style="left:1307px;top:271px;width:306px;height:24px;border:1px solid #a8a8a8;background:#fff;"></div><div class="a" style="top:276.15px;font-size:14px;line-height:14px;letter-spacing:0.270px;left:1311.00px;">01/10/2020</div><div class="dd" style="left:1600px;top:281px"></div><div class="a" style="left:1617px;top:271px;width:288px;height:24px;border:1px solid #a8a8a8;background:#fff;"></div><div class="a" style="top:276.15px;font-size:14px;line-height:14px;letter-spacing:0.326px;left:1620.50px;">03/10/2023</div><div class="dd" style="left:1892px;top:281px"></div><div class="a" style="top:306.15px;font-size:14px;line-height:14px;letter-spacing:-0.641px;left:1306.50px;">Người lập</div><div class="a" style="left:1375px;top:300px;width:530px;height:24px;border:1px solid #a8a8a8;background:#fff;"></div><div class="a" style="top:305.15px;font-size:14px;line-height:14px;letter-spacing:-0.156px;left:1378.50px;">Administrator</div><div class="dd" style="left:1872px;top:310px"></div><svg class="a" style="left:1886px;top:305px" width="15" height="14" viewBox="0 0 15 14">
<path d="M2 6.5A5.5 5.5 0 0 1 11.5 3L13.5 1V6.5H8L10 4.5A3.6 3.6 0 0 0 4 6.5Z" fill="#4cae3c"/>
<path d="M13 7.5A5.5 5.5 0 0 1 3.5 11L1.5 13V7.5H7L5 9.5A3.6 3.6 0 0 0 11 7.5Z" fill="#4cae3c"/></svg><div class="a h" style="left:1814px;top:329px;width:91px;height:24px;border:1px solid #c4c4c4"><svg width="100%" height="100%" style="display:block"><rect width="100%" height="100%" fill="url(#hp)"/></svg></div><svg class="a" style="left:1818px;top:333px" width="16" height="16" viewBox="0 0 16 16"><circle cx="6" cy="6" r="4.3" fill="none" stroke="#000" stroke-width="2"/><path d="M9 9L14 14" stroke="#000" stroke-width="2.8" stroke-linecap="round"/></svg><div class="a" style="top:335.15px;font-size:14px;line-height:14px;font-weight:bold;color:#0000ff;letter-spacing:-0.098px;left:1837.50px;">Tìm kiếm</div><div class="a" style="left:1307px;top:357px;width:598px;height:585px;border:1px solid #a8a8a8;background:#fff"></div><div class="a h" style="left:1308px;top:358px;width:596px;height:22px"><svg width="100%" height="100%" style="display:block"><rect width="100%" height="100%" fill="url(#hp)"/></svg></div><div class="a" style="left:1308px;top:380px;width:596px;height:1px;background:#c8c8c8"></div><div class="a" style="left:1308px;top:408px;width:591px;height:2px;background:#a8a8a8"></div><div class="a h" style="left:1308px;top:381px;width:21px;height:168px"><svg width="100%" height="100%" style="display:block"><rect width="100%" height="100%" fill="url(#hp)"/></svg></div><div class="a" style="left:1330px;top:410px;width:90px;height:27px;background:linear-gradient(90deg,#ffff00,#ffffc8)"></div><div class="a" style="left:1420px;top:410px;width:479px;height:27px;background:#f2f2f2"></div><div class="hl" style="left:1308px;top:437px;width:591px;height:1px"></div><div class="hl" style="left:1308px;top:465px;width:591px;height:1px"></div><div class="hl" style="left:1308px;top:493px;width:591px;height:1px"></div><div class="hl" style="left:1308px;top:521px;width:591px;height:1px"></div><div class="hl" style="left:1308px;top:549px;width:591px;height:1px"></div><div class="hl" style="left:1329px;top:358px;width:1px;height:191px;background:#c8c8c8"></div><div class="hl" style="left:1420px;top:358px;width:1px;height:191px;background:#c8c8c8"></div><div class="hl" style="left:1523px;top:358px;width:1px;height:191px;background:#c8c8c8"></div><div class="hl" style="left:1598px;top:358px;width:1px;height:191px;background:#c8c8c8"></div><div class="hl" style="left:1673px;top:358px;width:1px;height:191px;background:#c8c8c8"></div><div class="hl" style="left:1748px;top:358px;width:1px;height:191px;background:#c8c8c8"></div><div class="hl" style="left:1823px;top:358px;width:1px;height:191px;background:#c8c8c8"></div><div class="hl" style="left:1899px;top:358px;width:1px;height:191px;background:#c8c8c8"></div><div class="a" style="left:1308px;top:906px;width:596px;height:1px;background:#a8a8a8"></div><div class="a h" style="left:1308px;top:907px;width:596px;height:34px"><svg width="100%" height="100%" style="display:block"><rect width="100%" height="100%" fill="url(#hp)"/></svg></div><div class="a" style="top:362.00px;font-size:13px;line-height:13px;font-weight:bold;letter-spacing:0.259px;left:1333.50px;">Ngày lập</div><div class="a" style="top:362.00px;font-size:13px;line-height:13px;font-weight:bold;letter-spacing:0.095px;left:1424.50px;">Mã phiếu</div><div class="a" style="top:362.00px;font-size:13px;line-height:13px;font-weight:bold;letter-spacing:0.189px;left:1527.50px;">Tổng tiền</div><div class="a" style="top:362.00px;font-size:13px;line-height:13px;font-weight:bold;letter-spacing:-0.065px;left:1602.50px;">Ghi chú</div><div class="a" style="top:362.00px;font-size:13px;line-height:13px;font-weight:bold;letter-spacing:-0.374px;left:1677.50px;">Người lập</div><div class="a" style="top:362.00px;font-size:13px;line-height:13px;font-weight:bold;letter-spacing:0.198px;left:1752.50px;">Kho xuất</div><div class="a" style="top:362.00px;font-size:13px;line-height:13px;font-weight:bold;left:1827.50px;">Kho nhận</div><svg class="a" style="left:1312px;top:389px" width="7" height="10" viewBox="0 0 7 10"><circle cx="3.5" cy="3" r="2.3" fill="#000"/><rect x="3" y="4" width="1.2" height="5" fill="#000"/></svg><div class="a" style="left:1337px;top:393px;width:9px;height:1px;background:#888;box-shadow:0 3px 0 #888"></div><svg class="a" style="left:1426px;top:389px" width="17" height="11" viewBox="0 0 17 11"><text x="0" y="9" font-size="7" fill="#555" font-family="Liberation Mono">A</text><rect x="5" y="0.5" width="6" height="10" fill="#10a030"/><text x="5.8" y="9" font-size="7" fill="#fff" font-family="Liberation Mono">B</text><text x="11.5" y="9" font-size="7" fill="#555" font-family="Liberation Mono">C</text></svg><div class="a" style="left:1532px;top:393px;width:9px;height:1px;background:#888;box-shadow:0 3px 0 #888"></div><svg class="a" style="left:1603px;top:389px" width="17" height="11" viewBox="0 0 17 11"><text x="0" y="9" font-size="7" fill="#555" font-family="Liberation Mono">A</text><rect x="5" y="0.5" width="6" height="10" fill="#10a030"/><text x="5.8" y="9" font-size="7" fill="#fff" font-family="Liberation Mono">B</text><text x="11.5" y="9" font-size="7" fill="#555" font-family="Liberation Mono">C</text></svg><svg class="a" style="left:1678px;top:389px" width="17" height="11" viewBox="0 0 17 11"><text x="0" y="9" font-size="7" fill="#555" font-family="Liberation Mono">A</text><rect x="5" y="0.5" width="6" height="10" fill="#10a030"/><text x="5.8" y="9" font-size="7" fill="#fff" font-family="Liberation Mono">B</text><text x="11.5" y="9" font-size="7" fill="#555" font-family="Liberation Mono">C</text></svg><svg class="a" style="left:1753px;top:389px" width="17" height="11" viewBox="0 0 17 11"><text x="0" y="9" font-size="7" fill="#555" font-family="Liberation Mono">A</text><rect x="5" y="0.5" width="6" height="10" fill="#10a030"/><text x="5.8" y="9" font-size="7" fill="#fff" font-family="Liberation Mono">B</text><text x="11.5" y="9" font-size="7" fill="#555" font-family="Liberation Mono">C</text></svg><svg class="a" style="left:1828px;top:389px" width="17" height="11" viewBox="0 0 17 11"><text x="0" y="9" font-size="7" fill="#555" font-family="Liberation Mono">A</text><rect x="5" y="0.5" width="6" height="10" fill="#10a030"/><text x="5.8" y="9" font-size="7" fill="#fff" font-family="Liberation Mono">B</text><text x="11.5" y="9" font-size="7" fill="#555" font-family="Liberation Mono">C</text></svg><svg class="a" style="left:1314px;top:418px" width="5" height="9" viewBox="0 0 5 9"><path d="M0.5 0.5L4.5 4.5L0.5 8.5Z" fill="#000"/></svg><div class="a" style="top:415.65px;font-size:14px;line-height:14px;font-weight:bold;color:#ff0000;left:1333.50px;transform:scaleX(1.2430);transform-origin:left;">03/10/20...</div><div class="a" style="top:415.65px;font-size:14px;line-height:14px;letter-spacing:-0.236px;left:1424.50px;">XCK00005-0...</div><div class="a" style="top:415.65px;font-size:14px;line-height:14px;left:1482.72px;width:112.28px;text-align:right;">4,984,000</div><div class="a" style="top:415.65px;font-size:14px;line-height:14px;letter-spacing:-0.235px;left:1677.50px;">Administ...</div><div class="a" style="top:415.65px;font-size:14px;line-height:14px;letter-spacing:-0.193px;left:1752.50px;">Kho chính</div><div class="a" style="top:415.65px;font-size:14px;line-height:14px;letter-spacing:-0.292px;left:1827.50px;">Kho hư</div><div class="a" style="top:443.65px;font-size:14px;line-height:14px;letter-spacing:0.326px;left:1333.50px;">03/10/2023</div><div class="a" style="top:443.65px;font-size:14px;line-height:14px;letter-spacing:-0.236px;left:1424.50px;">XCK00004-0...</div><div class="a" style="top:443.65px;font-size:14px;line-height:14px;left:1482.72px;width:112.28px;text-align:right;">1,805,000</div><div class="a" style="top:443.65px;font-size:14px;line-height:14px;letter-spacing:-0.235px;left:1677.50px;">Administ...</div><div class="a" style="top:443.65px;font-size:14px;line-height:14px;letter-spacing:-0.193px;left:1752.50px;">Kho chính</div><div class="a" style="top:443.65px;font-size:14px;line-height:14px;letter-spacing:-0.292px;left:1827.50px;">Kho hư</div><div class="a" style="top:471.65px;font-size:14px;line-height:14px;letter-spacing:0.326px;left:1333.50px;">03/10/2023</div><div class="a" style="top:471.65px;font-size:14px;line-height:14px;letter-spacing:-0.236px;left:1424.50px;">XCK00003-0...</div><div class="a" style="top:471.65px;font-size:14px;line-height:14px;left:1494.39px;width:100.61px;text-align:right;">126,000</div><div class="a" style="top:471.65px;font-size:14px;line-height:14px;letter-spacing:-0.235px;left:1677.50px;">Administ...</div><div class="a" style="top:471.65px;font-size:14px;line-height:14px;letter-spacing:-0.193px;left:1752.50px;">Kho chính</div><div class="a" style="top:471.65px;font-size:14px;line-height:14px;letter-spacing:-0.292px;left:1827.50px;">Kho hư</div><div class="a" style="top:499.65px;font-size:14px;line-height:14px;letter-spacing:0.326px;left:1333.50px;">03/10/2023</div><div class="a" style="top:499.65px;font-size:14px;line-height:14px;letter-spacing:-0.236px;left:1424.50px;">XCK00002-0...</div><div class="a" style="top:499.65px;font-size:14px;line-height:14px;left:1482.72px;width:112.28px;text-align:right;">1,400,000</div><div class="a" style="top:499.65px;font-size:14px;line-height:14px;letter-spacing:-0.235px;left:1677.50px;">Administ...</div><div class="a" style="top:499.65px;font-size:14px;line-height:14px;letter-spacing:-0.193px;left:1752.50px;">Kho chính</div><div class="a" style="top:499.65px;font-size:14px;line-height:14px;letter-spacing:-0.292px;left:1827.50px;">Kho hư</div><div class="a" style="top:527.65px;font-size:14px;line-height:14px;letter-spacing:0.326px;left:1333.50px;">10/07/2023</div><div class="a" style="top:527.65px;font-size:14px;line-height:14px;letter-spacing:-0.236px;left:1424.50px;">XCK00001-1...</div><div class="a" style="top:527.65px;font-size:14px;line-height:14px;left:1486.62px;width:108.38px;text-align:right;">10,000,...</div><div class="a" style="top:527.65px;font-size:14px;line-height:14px;letter-spacing:-0.235px;left:1677.50px;">Administ...</div><div class="a" style="top:527.65px;font-size:14px;line-height:14px;letter-spacing:-0.193px;left:1752.50px;">Kho chính</div><div class="a" style="top:527.65px;font-size:14px;line-height:14px;letter-spacing:-0.292px;left:1827.50px;">Kho hư</div><div class="a" style="top:1021.69px;font-size:11px;line-height:11px;font-weight:bold;left:7.50px;transform:scaleX(1.0666);transform-origin:left;">Chào mừng: Administrator đến với phần mềm MekongSoft</div><div class="a" style="left:349px;top:1021px;width:1px;height:12px;background:#a8c0d8"></div><div class="a" style="top:1021.69px;font-size:11px;line-height:11px;font-weight:bold;left:362.70px;transform:scaleX(1.0669);transform-origin:left;">Version: 4.0.0</div><div class="a" style="left:452px;top:1021px;width:1px;height:12px;background:#a8c0d8"></div><div class="a" style="top:1021.69px;font-size:11px;line-height:11px;font-weight:bold;color:#ff0000;left:465.50px;transform:scaleX(1.1078);transform-origin:left;">Ngày: 03/10/2023 2:57:52 CH</div><div class="vdash" style="left:1613px;top:1017px;height:21px"></div><div class="a" style="top:1021.69px;font-size:11px;line-height:11px;font-weight:bold;left:1623.50px;transform:scaleX(1.0801);transform-origin:left;">@2023 MekongSoft. Thông tin hỗ trợ: 0901 000 508</div><svg class="a" style="left:899px;top:604px" width="15" height="22" viewBox="0 0 15 22"><path d="M1.5 1.2V17.6L5.4 14L8.4 20.2L11.2 19L8.4 13H12.8Z" fill="#fff" stroke="#161622" stroke-width="1.3" stroke-linejoin="round"/></svg></body></html>
